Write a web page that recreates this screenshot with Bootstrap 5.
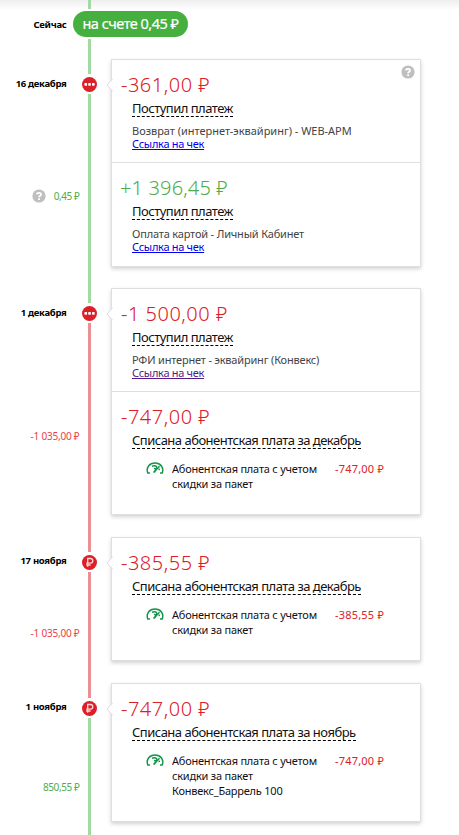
<!DOCTYPE html>
<html lang="ru">
<head>
<meta charset="utf-8">
<meta name="viewport" content="width=device-width, initial-scale=1">
<title>История платежей</title>
<link rel="stylesheet" href="https://cdn.jsdelivr.net/npm/bootstrap@5.3.0/dist/css/bootstrap.min.css">
<style>
body{font-family:"Noto Sans","Open Sans",sans-serif;color:#111;background:#fff;width:459px;height:835px;overflow:hidden}
.top-shade{height:10px;background:linear-gradient(#eee,#fff);position:absolute;left:0;top:0;width:100%;z-index:-1}
.now-row{height:59px}
.side{width:79.5px;flex:none;text-align:right}
.now-date{padding-top:17px}
.date-label{font-size:9.5px;font-weight:700;line-height:16px;padding-right:13px;color:#000;white-space:nowrap;letter-spacing:-.3px}
.balance{font-size:10px;line-height:14px;white-space:nowrap;letter-spacing:-.4px}
.balance.debt{letter-spacing:-.2px}
.rail{width:20px;flex:none;align-items:center}
.seg{width:3px;flex:none}
.seg-top{height:15px}
.seg-start{height:9px}
.seg-now{height:20px}
.g{background:#a3d9a3}.r{background:#ea9094}
.plus{color:#4fac4b}.minus{color:#dc2028}.debt{color:#ea3f4a}
.knob{height:20px;flex:none;padding-top:3px}
.knob svg{display:block}
.now-pill{position:absolute;left:73px;top:11px;width:115px;height:26px;border-radius:13px;background:#45b03f;color:#fff;font-size:14.5px;line-height:24px;text-align:center;letter-spacing:-.5px;white-space:nowrap;-webkit-text-stroke:.2px #fff}
.bill{width:310px;margin-left:11.5px;border:1px solid #dfdfdf;background:#fff;box-shadow:0 2px 4px rgba(0,0,0,.18);flex:none}
.notch{position:absolute;left:-6px;top:17px}
.entry{padding:11px 0 0 9px}
.entry+.entry{border-top:1px solid #dfdfdf}
.entry-pay{height:102px}
.sum{font-size:20px;font-weight:300;line-height:27px;white-space:nowrap;letter-spacing:.5px}
.sum.plus{letter-spacing:.15px;margin-left:-1px}
.what{display:table;margin-left:11px;padding-top:3px;font-size:13px;line-height:15px;border-bottom:1px dashed #000;color:#111;white-space:nowrap;letter-spacing:-.51px}
.info{margin:7px 0 0 11px;font-size:11px;line-height:13px;color:#444;white-space:nowrap;letter-spacing:-.18px}
.info-wide{letter-spacing:-.02px}
.info a{color:#00e;letter-spacing:-.3px}.info a.seen{color:#551a8b}
.detail{margin:12px 0 0 25px;font-size:11px;line-height:15px;letter-spacing:-.22px;color:#111}
.detail svg{flex:none;margin-top:1px}
.detail-name{width:171px;padding-left:8px;white-space:nowrap}
.part{letter-spacing:.2px}
.hint{position:absolute;right:5px;top:5px}
.row-a{height:229px}.row-b{height:249px}.row-c{height:146px}.row-d{height:152px}
.row-a .date-label,.row-b .date-label{margin-top:17px}.row-c .date-label,.row-d .date-label{margin-top:16px}
.row-a .balance{margin-top:97px}.row-b .balance{margin-top:108px}.row-c .balance{margin-top:57px}.row-d .balance{margin-top:65px}
.row-a .bill{height:208px}.row-b .bill{height:227px}.row-c .bill{height:124px}.row-d .bill{height:139px}
</style>
</head>
<body>
<div class="top-shade"></div>
<svg width="0" height="0" class="position-absolute">
 <symbol id="dots" viewBox="0 0 15 15"><circle cx="7.5" cy="7.5" r="7.5" fill="#dc2028"/><g fill="#fff"><rect x="2.4" y="6" width="2.7" height="2.7" rx=".7"/><rect x="6.2" y="6" width="2.7" height="2.7" rx=".7"/><rect x="10" y="6" width="2.7" height="2.7" rx=".7"/></g></symbol>
 <symbol id="rub" viewBox="0 0 15 15"><circle cx="7.5" cy="7.5" r="7.5" fill="#dc2028"/><path d="M5.700 11.800V3.500H8.500a2.300 2.300 0 0 1 0 4.600H4.200M4.200 10h4.400" fill="none" stroke="#fbd5d6" stroke-width="1.300"/></symbol>
 <symbol id="q" viewBox="0 0 14 14"><circle cx="7" cy="7" r="6.6" fill="#bfbfbf"/><path d="M4.900 5.300C5.100 3.300 9.100 3.200 9.100 5.400 9.100 6.800 7.100 6.800 7.100 8.300M7.100 9.300v1.800" fill="none" stroke="#fff" stroke-width="1.800"/></symbol>
 <symbol id="gauge" viewBox="0 0 18 12"><g fill="none" stroke="#18964c"><path d="M4 11H1.800C-.2 5.500 3.400 1 9 1s9.200 4.500 7.200 10H14" stroke-width="1.500"/><path d="M6 4.200C9 3.300 11.200 4 10.700 6.100L8.300 10.300" stroke-width="1.500"/><path d="M7.500 10.600L13.500 4.200M8 6.500l2 .3M12.500 7.500l1.500-.3" stroke-width="1.500"/></g></symbol>
 <symbol id="notch" viewBox="0 0 7 16"><path d="M7 1.500L1 8l6 6.500" fill="#fff" stroke="#dcdcdc"/></symbol>
</svg>

<div class="now-row d-flex position-relative">
 <div class="side now-date"><div class="date-label">Сейчас</div></div>
 <div class="rail d-flex flex-column"><div class="seg g seg-start"></div><div class="seg g seg-now mt-auto"></div></div>
 <div class="now-pill">на счете 0,45 ₽</div>
</div>

<div class="row-a d-flex">
 <div class="side"><div class="date-label">16 декабря</div><div class="balance plus d-flex justify-content-end align-items-center"><svg width="14" height="14" class="me-2"><use href="#q"/></svg>0,45 ₽</div></div>
 <div class="rail d-flex flex-column"><div class="seg seg-top g"></div><div class="knob"><svg width="15" height="15"><use href="#dots"/></svg></div><div class="seg g flex-fill"></div></div>
 <div class="bill position-relative"><svg class="notch" width="7" height="16"><use href="#notch"/></svg><svg class="hint" width="14" height="14"><use href="#q"/></svg>
  <div class="entry entry-pay"><div class="sum minus">-361,00 ₽</div><div class="what">Поступил платеж</div><div class="info info-wide">Возврат (интернет-эквайринг) - WEB-АРМ<br><a href="#">Ссылка на чек</a></div></div>
  <div class="entry entry-pay"><div class="sum plus">+1 396,45 ₽</div><div class="what">Поступил платеж</div><div class="info">Оплата картой - Личный Кабинет<br><a href="#">Ссылка на чек</a></div></div>
 </div>
</div>

<div class="row-b d-flex">
 <div class="side"><div class="date-label">1 декабря</div><div class="balance debt">-1 035,00 ₽</div></div>
 <div class="rail d-flex flex-column"><div class="seg seg-top g"></div><div class="knob"><svg width="15" height="15"><use href="#dots"/></svg></div><div class="seg r flex-fill"></div></div>
 <div class="bill position-relative"><svg class="notch" width="7" height="16"><use href="#notch"/></svg>
  <div class="entry entry-pay"><div class="sum minus">-1 500,00 ₽</div><div class="what">Поступил платеж</div><div class="info">РФИ интернет - эквайринг (Конвекс)<br><a class="seen" href="#">Ссылка на чек</a></div></div>
  <div class="entry"><div class="sum minus">-747,00 ₽</div><div class="what">Списана абонентская плата за декабрь</div><div class="detail d-flex"><svg width="18" height="12"><use href="#gauge"/></svg><div class="detail-name">Абонентская плата с учетом<br>скидки за пакет</div><div class="minus part">-747,00 ₽</div></div></div>
 </div>
</div>

<div class="row-c d-flex">
 <div class="side"><div class="date-label">17 ноября</div><div class="balance debt">-1 035,00 ₽</div></div>
 <div class="rail d-flex flex-column"><div class="seg seg-top r"></div><div class="knob"><svg width="15" height="15"><use href="#rub"/></svg></div><div class="seg r flex-fill"></div></div>
 <div class="bill position-relative"><svg class="notch" width="7" height="16"><use href="#notch"/></svg>
  <div class="entry"><div class="sum minus">-385,55 ₽</div><div class="what">Списана абонентская плата за декабрь</div><div class="detail d-flex"><svg width="18" height="12"><use href="#gauge"/></svg><div class="detail-name">Абонентская плата с учетом<br>скидки за пакет</div><div class="minus part">-385,55 ₽</div></div></div>
 </div>
</div>

<div class="row-d d-flex">
 <div class="side"><div class="date-label">1 ноября</div><div class="balance plus">850,55 ₽</div></div>
 <div class="rail d-flex flex-column"><div class="seg seg-top r"></div><div class="knob"><svg width="15" height="15"><use href="#rub"/></svg></div><div class="seg g flex-fill"></div></div>
 <div class="bill position-relative"><svg class="notch" width="7" height="16"><use href="#notch"/></svg>
  <div class="entry"><div class="sum minus">-747,00 ₽</div><div class="what">Списана абонентская плата за ноябрь</div><div class="detail d-flex"><svg width="18" height="12"><use href="#gauge"/></svg><div class="detail-name">Абонентская плата с учетом<br>скидки за пакет<br>Конвекс_Баррель 100</div><div class="minus part">-747,00 ₽</div></div></div>
 </div>
</div>
<script src="https://cdn.jsdelivr.net/npm/bootstrap@5.3.0/dist/js/bootstrap.bundle.min.js"></script>
</body>
</html>
